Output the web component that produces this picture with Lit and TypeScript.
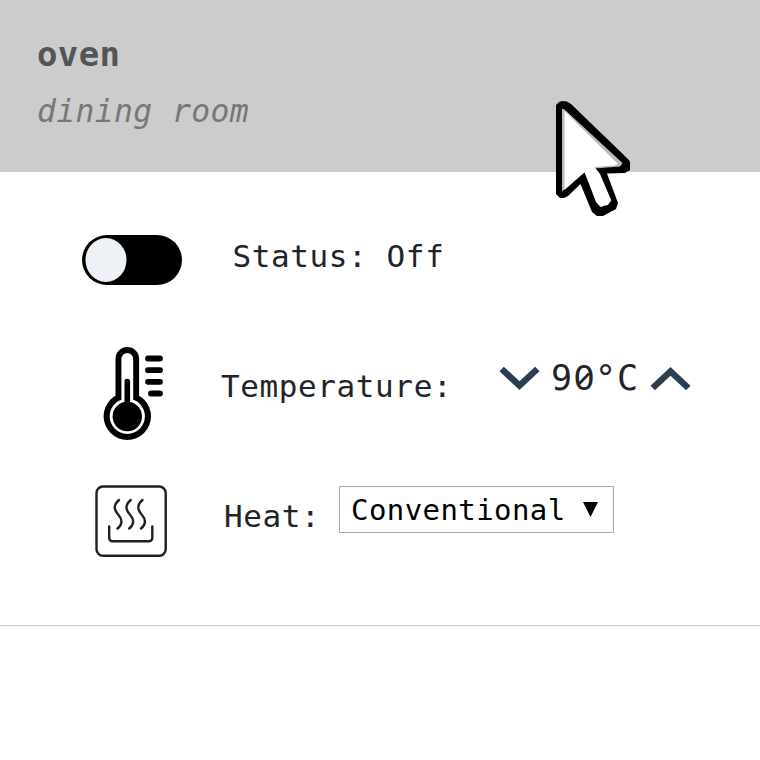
import { LitElement, html, css } from "lit";
import { customElement, property } from "lit/decorators.js";

@customElement("device-header")
class DeviceHeader extends LitElement {
  @property() name = "";
  @property() room = "";

  static styles = css`
    :host { display: block; box-sizing: border-box; height: 172px; padding: 34px 37px 0; background: #cccccc; }
    .name { font-size: 34px; letter-spacing: 0.4px; font-weight: 700; line-height: 40px; color: #555555; }
    .room { margin-top: 17px; font-size: 31.4px; letter-spacing: 0.37px; font-style: italic; line-height: 40px; color: #777777; }
  `;

  render() {
    return html`<div class="name">${this.name}</div><div class="room">${this.room}</div>`;
  }
}

@customElement("app-root")
class AppRoot extends LitElement {
  static styles = css`
    :host {
      display: block; position: relative; height: 760px; overflow: hidden; background: #fff;
      font-family: "DejaVu Sans Mono", monospace; font-size: 31px; letter-spacing: 0.6px; line-height: 40px; color: #212529;
    }
    .body { box-sizing: border-box; height: 454px; border-bottom: 1px solid #cccccc; padding-top: 58px; }
    .row { display: flex; align-items: flex-start; white-space: pre; }
    svg { display: block; flex: none; overflow: visible; }
    .status { height: 114px; padding-left: 82px; }
    .switch { margin-top: 5px; }
    .status .label { margin: 6px 0 0 50.5px; }
    .temp { height: 136px; padding-left: 100px; }
    .temp .label { margin: 22px 0 0 51px; width: 279px; }
    .stepper { display: flex; align-items: center; margin-top: 14px; height: 40px; }
    .value { font-size: 35px; letter-spacing: 0.9px; margin: 0 10.5px 0 11px; width: 89px; }
    .zero { position: relative; display: inline-block; width: 22px; text-align: center; letter-spacing: 0; font-size: 34px; font-family: "DejaVu Sans", sans-serif; }
    .slash { position: absolute; left: 3px; top: 7px; }
    .heat { padding-left: 95px; }
    .pan { margin-top: 5px; }
    .heat .label { margin: 16px 0 0 57px; width: 115px; }
    .select {
      display: flex; align-items: center; justify-content: space-between; box-sizing: border-box;
      width: 275px; height: 47px; margin-top: 6px; padding: 0 15px 0 11px;
      border: 1px solid #a9a9a9; font-size: 29px; letter-spacing: 0.42px; color: #000;
    }
    .cursor { position: absolute; left: 554px; top: 99px; }
  `;

  render() {
    return html`
      <device-header name="oven" room="dining room"></device-header>
      <div class="body">
        <div class="row status">
          <svg class="switch" width="100" height="50" viewBox="0 0 100 50">
            <rect width="100" height="50" rx="25" />
            <ellipse cx="24" cy="25" rx="20.5" ry="22" fill="#eef2f6" />
          </svg>
          <div class="label">Status: Off</div>
        </div>
        <div class="row temp">
          <svg width="70" height="98" viewBox="100 344 70 98">
            <rect x="115.5" y="347" width="23.6" height="60" rx="11.8" />
            <circle cx="127.3" cy="416.3" r="23.7" />
            <rect x="121.4" y="353" width="11.8" height="55" rx="5.9" fill="#fff" />
            <circle cx="127.3" cy="416.3" r="17.6" fill="#fff" />
            <circle cx="127.3" cy="416.5" r="14.7" />
            <path d="M127.3 381.5V416" stroke="#000" stroke-width="5.6" stroke-linecap="round" />
            <path d="M148 358.5H160M148 370.2H160M148 381.8H160M151 393.5H160" stroke="#000" stroke-width="5.8" stroke-linecap="round" />
          </svg>
          <div class="label">Temperature:</div>
          <div class="stepper">
            <svg width="40" height="26" viewBox="0 0 40 26"><path d="M1.700 4L19.500 20.700L37.300 4" fill="none" stroke="#2c3e50" stroke-width="6.400" /></svg>
            <div class="value">9<span class="zero">0<svg class="slash" width="16" height="26" viewBox="0 0 16 26"><path d="M3 19L13 8.500" stroke="#212529" stroke-width="2.600" /></svg></span>°C</div>
            <svg width="40" height="26" viewBox="0 0 40 26"><path d="M1.700 23L19.500 6.300L37.300 23" fill="none" stroke="#2c3e50" stroke-width="6.400" /></svg>
          </div>
        </div>
        <div class="row heat">
          <svg class="pan" width="72" height="72" viewBox="95 485 72 72" fill="none" stroke="#231f20" stroke-width="2.4" stroke-linecap="round" stroke-linejoin="round">
            <rect x="96.5" y="486.5" width="69.200" height="69.200" rx="6.500" />
            <path d="M109.200 526.500V538a3.300 3.300 0 0 0 3.300 3.300H149a3.300 3.300 0 0 0 3.300-3.300V526.500" />
            <path d="M119 500C112 506 115 511 118.500 515C123 520 122 525 117.500 528.500M130.700 500C123.700 506 126.700 511 130.200 515C134.700 520 133.700 525 129.200 528.500M142.500 500C135.500 506 138.500 511 142 515C146.500 520 145.500 525 141 528.500" />
          </svg>
          <div class="label">Heat:</div>
          <div class="select">
            <span>Conventional</span>
            <svg width="15" height="15" viewBox="0 0 15 15"><path d="M0 0H15L7.500 15Z" /></svg>
          </div>
        </div>
      </div>
      <svg class="cursor" width="80" height="120" viewBox="554 99 80 120">
        <path d="M556 105L559 102L562 101L567 101.500L571 104L629 160L630 162V170L625 173L607 173.500L618 203L616 209L603 216H597L592 212L580.500 184L568 196L564 198H560L556 194Z" />
        <path d="M562 109L564 109L622.500 163L620 166.500L594 168.500L598 172.500L611.500 201L601 207.500L584.500 172.500L562 191.500Z" fill="#bbb" />
        <path d="M564.500 111L618 164L614 165.500L594.500 167L600 174L611 200L608 205L600 206.500L596 202L584.500 172L564.500 190Z" fill="#fff" />
      </svg>
    `;
  }
}
